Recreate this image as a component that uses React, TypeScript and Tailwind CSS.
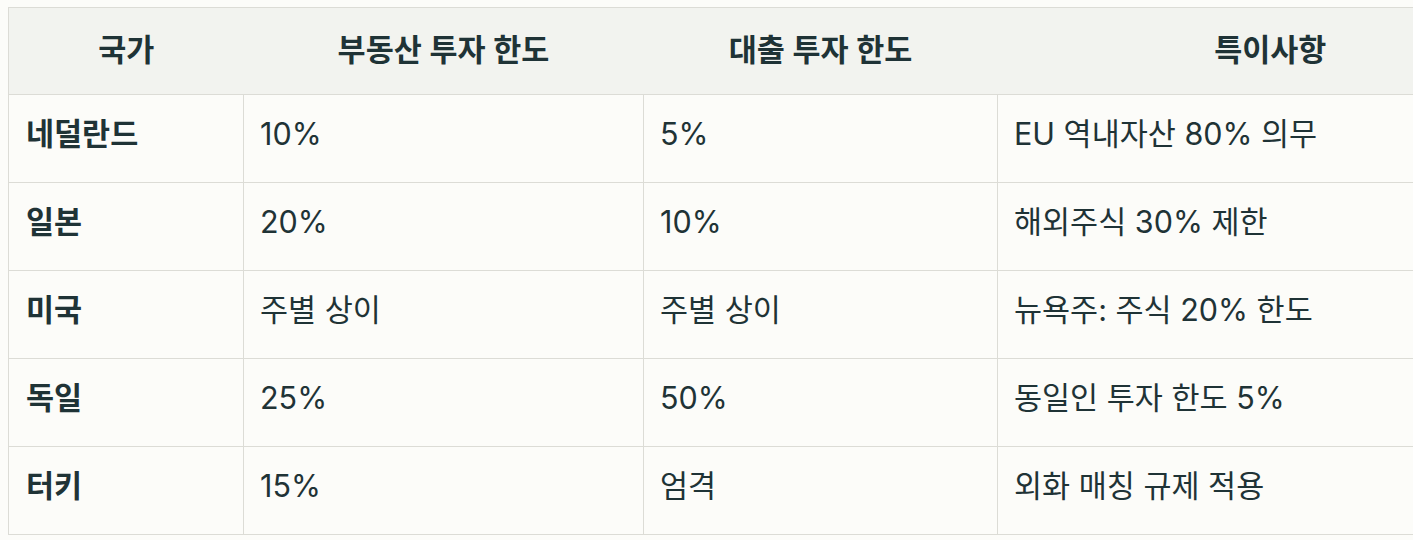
import React from "react";

const rows = [
    { country: "네덜란드", realEstate: "10%", loan: "5%", note: "EU 역내자산 80% 의무" },
    { country: "일본", realEstate: "20%", loan: "10%", note: "해외주식 30% 제한" },
    { country: "미국", realEstate: "주별 상이", loan: "주별 상이", note: "뉴욕주: 주식 20% 한도" },
    { country: "독일", realEstate: "25%", loan: "50%", note: "동일인 투자 한도 5%" },
    { country: "터키", realEstate: "15%", loan: "엄격", note: "외화 매칭 규제 적용" },
];

const headers = ["국가", "부동산 투자 한도", "대출 투자 한도", "특이사항"];

export default function App() {
    return (
        <div className="min-h-screen bg-[#fcfcf9] pl-2 pt-[7px] overflow-hidden font-['Inter','Noto_Sans_CJK_KR',sans-serif] text-[#1f3336]">
            <table className="border-collapse table-fixed w-[1536px] text-[30.5px] leading-none">
                <colgroup>
                    <col className="w-[235px]" />
                    <col className="w-[400px]" />
                    <col className="w-[354px]" />
                    <col />
                </colgroup>
                <thead>
                    <tr className="h-[87px] bg-[#f2f3ef] border border-[#dcdcd6]">
                        {headers.map((h) => (
                            <th key={h} className="font-semibold text-center align-middle pb-[2px]">
                                {h}
                            </th>
                        ))}
                    </tr>
                </thead>
                <tbody>
                    {rows.map((r) => (
                        <tr key={r.country} className="h-[88px]">
                            <td className="border border-[#dcdcd6] px-[17px] pb-[8px] font-semibold align-middle">
                                {r.country}
                            </td>
                            <td className="border border-[#dcdcd6] px-[16px] pb-[8px] align-middle">{r.realEstate}</td>
                            <td className="border border-[#dcdcd6] px-[16px] pb-[8px] align-middle">{r.loan}</td>
                            <td className="border border-[#dcdcd6] px-[16px] pb-[8px] align-middle">{r.note}</td>
                        </tr>
                    ))}
                </tbody>
            </table>
        </div>
    );
}
